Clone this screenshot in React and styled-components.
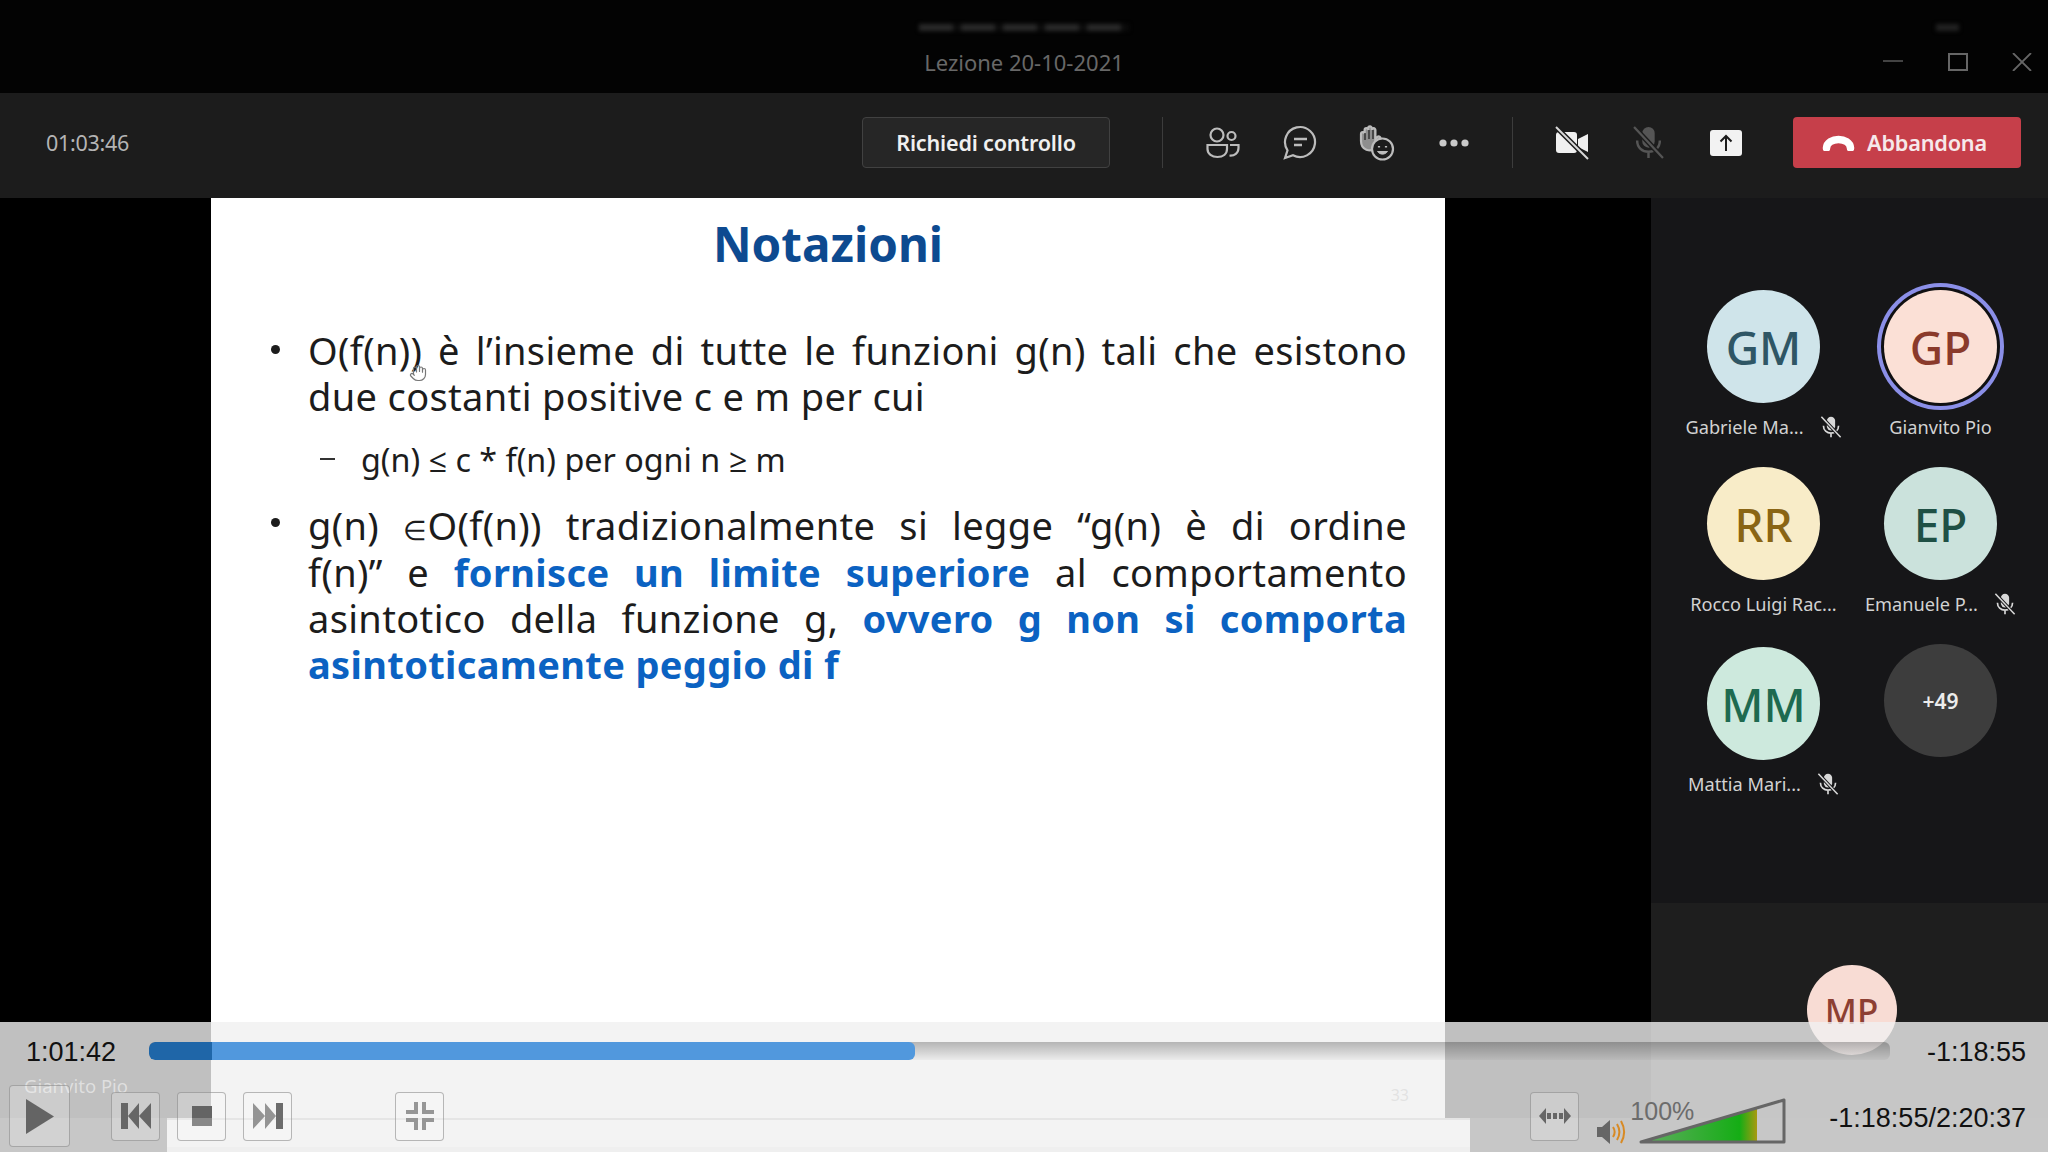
import React from 'react';
import styled, { createGlobalStyle } from 'styled-components';
import { Hand } from 'lucide-react';

const Global = createGlobalStyle`
    html, body {
        margin: 0;
        background: #000;
        overflow: hidden;
    }
    * { box-sizing: border-box; }
`

const Page = styled.div`
    position: relative;
    width: 2048px;
    height: 1152px;
    display: flex;
    flex-direction: column;
    overflow: hidden;
    background: #000;
    font-family: "Noto Sans", "Open Sans", sans-serif;
`

/* title bar */
const TitleBar = styled.div`
    height: 93px;
    flex: none;
    display: grid;
    grid-template-columns: 1fr auto 1fr;
    padding-top: 24px;
    background: #030303;
`
const TitleCol = styled.div`
    grid-column: 2;
    display: flex;
    flex-direction: column;
    align-items: center;
    gap: 16px;
`
const Smudge = styled.div`
    width: ${p => p.$w}px;
    height: 7px;
    filter: blur(2px);
    background: repeating-linear-gradient(90deg, #2a2a2a 0 34px, #0c0c0c 34px 42px);
`
const Title = styled.div`
    font-size: 22px;
    line-height: 30px;
    color: #686868;
`
const WinCol = styled.div`
    grid-column: 3;
    display: flex;
    flex-direction: column;
    align-items: flex-end;
    padding-right: 16px;
    ${Smudge} {
        margin-right: 73px;
        background: #222;
    }
`
const WinControls = styled.div`
    display: flex;
    gap: 44.5px;
    margin-top: 22px;
`

/* toolbar */
const Toolbar = styled.div`
    height: 105px;
    flex: none;
    display: flex;
    align-items: center;
    padding: 0 27px 6px 46px;
    background: #1c1c1c;
`
const Timer = styled.div`
    font-size: 21.5px;
    color: #b4b4b4;
    letter-spacing: -0.3px;
    margin-right: auto;
`
const ControlBtn = styled.div`
    width: 248px;
    height: 51px;
    display: flex;
    align-items: center;
    justify-content: center;
    border: 1px solid #414141;
    border-radius: 4px;
    background: #262626;
    color: #f0f0f0;
    font-size: 21.6px;
    font-weight: 600;
    letter-spacing: -0.2px;
`
const Divider = styled.div`
    width: 1px;
    height: 51px;
    background: #3c3c3c;
    margin: 0 ${p => p.$right}px 0 ${p => p.$left}px;
`
const ToolIcon = styled.div`
    width: 77px;
    height: 51px;
    display: flex;
    align-items: center;
    justify-content: center;
`
const LeaveBtn = styled.div`
    width: 228px;
    height: 51px;
    margin-left: 29px;
    padding-right: 5px;
    display: flex;
    align-items: center;
    justify-content: center;
    gap: 12px;
    border-radius: 4px;
    background: #c63f4a;
    color: #f6e9ea;
    font-size: 21.7px;
    font-weight: 600;
    letter-spacing: -0.2px;
`

/* meeting area */
const Main = styled.div`
    height: 920px;
    flex: none;
    display: flex;
`
const Gutter = styled.div`
    width: 211px;
    flex: none;
    display: flex;
    align-items: flex-end;
    padding: 0 0 20px 24px;
    background: #000;
    color: #999;
    font-size: 18.5px;
`
const Slide = styled.div`
    position: relative;
    width: 1234px;
    flex: none;
    display: flex;
    flex-direction: column;
    padding: 16px 38px 12px 60px;
    background: #fff;
    color: #1c1c1c;
`
const SlideTitle = styled.h1`
    margin: 0 0 53px -22px;
    height: 60px;
    line-height: 60px;
    text-align: center;
    font-size: 47.6px;
    font-weight: 700;
    color: #0d4a90;
`
const BulletRow = styled.div`
    display: flex;
    margin-bottom: ${p => p.$after || 0}px;
`
const Dot = styled.div`
    width: 9px;
    height: 9px;
    flex: none;
    margin: ${p => p.$top}px 28px 0 0;
    border-radius: 50%;
    background: #1c1c1c;
`
const Lines = styled.div`
    flex: 1;
    min-width: 0;
`
const Line = styled.div`
    font-size: 38px;
    line-height: 46.2px;
    letter-spacing: 0.35px;
    text-align: ${p => p.$fill ? 'justify' : 'left'};
    text-align-last: ${p => p.$fill ? 'justify' : 'left'};
    white-space: ${p => p.$fill ? 'normal' : 'nowrap'};
`
const Strong = styled.span`
    font-weight: 700;
    color: #0b62c2;
`
const Element = styled.span`
    font-size: 27px;
    line-height: 0;
`
const SubRow = styled.div`
    display: flex;
    align-items: center;
    height: 46px;
    margin-bottom: 20px;
    padding-left: 49px;
    font-size: 32.3px;
`
const SubDash = styled.div`
    width: 15px;
    height: 2px;
    margin-right: 26px;
    background: #333;
`
const Pointer = styled.div`
    position: absolute;
    left: 198px;
    top: 166px;
    display: flex;
    color: #777;
`
const PageNumber = styled.div`
    margin-top: auto;
    align-self: flex-end;
    margin-right: -2px;
    font-size: 16px;
    color: #a8a8a8;
`
const BlackGap = styled.div`
    width: 206px;
    flex: none;
    background: #000;
`

/* participants */
const Panel = styled.div`
    flex: 1;
    display: flex;
    flex-direction: column;
    background: #1e1e1e;
`
const PanelTop = styled.div`
    height: 705px;
    flex: none;
    padding: 92px 0 0 24px;
    background: #161618;
`
const Grid = styled.div`
    display: grid;
    grid-template-columns: 177px 177px;
    grid-template-rows: 177px 180px auto;
`
const Person = styled.div`
    display: flex;
    flex-direction: column;
    align-items: center;
`
const Avatar = styled.div`
    width: ${p => p.$size || 113}px;
    height: ${p => p.$size || 113}px;
    flex: none;
    display: flex;
    align-items: center;
    justify-content: center;
    border-radius: 50%;
    background: ${p => p.$bg};
    color: ${p => p.$fg};
    font-size: ${p => p.$font || 46}px;
    font-weight: ${p => p.$weight || 500};
    margin-top: ${p => p.$lift ? -p.$lift : 0}px;
    box-shadow: ${p => p.$speaking ? '0 0 0 3px #101012, 0 0 0 7px #8b8fe8' : 'none'};
`
const NameRow = styled.div`
    display: flex;
    align-items: center;
    justify-content: center;
    gap: 16px;
    height: 24px;
    margin-top: 12px;
    font-size: 18.2px;
    color: #d2d2d2;
    white-space: nowrap;
`
const PanelBottom = styled.div`
    flex: 1;
    display: flex;
    justify-content: center;
    padding: 62px 0 0 4px;
`

/* what is behind the player at the very bottom */
const LowerBand = styled.div`
    flex: 1;
    display: flex;
    background: #262626;
`
const LowerSheet = styled.div`
    width: 1303px;
    margin-left: 167px;
    border-top: 2px solid #b8b8b8;
    background: linear-gradient(#fff 0 27px, #e8e8e8 27px);
`

/* player bar */
const Player = styled.div`
    position: absolute;
    left: 0;
    right: 0;
    bottom: 0;
    height: 130px;
    padding: 20px 22px 0 9px;
    background: rgba(240, 240, 240, 0.8);
    font-family: "Liberation Sans", Arial, sans-serif;
`
const SeekRow = styled.div`
    display: flex;
    align-items: center;
    height: 18px;
`
const Clock = styled.div`
    font-size: 27px;
    line-height: 30px;
    padding-top: ${p => p.$drop || 0}px;
    color: #111;
    white-space: nowrap;
`
const ElapsedBox = styled.div`
    width: 140px;
    padding-left: 17px;
    flex: none;
`
const Track = styled.div`
    width: 1741px;
    height: 18px;
    flex: none;
    border-radius: 6px;
    overflow: hidden;
    background: linear-gradient(rgba(0, 0, 0, 0.26), rgba(0, 0, 0, 0.03));
`
const TrackFill = styled.div`
    height: 100%;
    border-radius: 6px;
    background: linear-gradient(90deg, #1f66a8 0 63px, #5198dd 63px);
`
const RemainBox = styled.div`
    margin-left: auto;
`
const ButtonRow = styled.div`
    display: flex;
    align-items: center;
    height: 62px;
    margin-top: 25px;
`
const PlayerBtn = styled.div`
    width: ${p => p.$w || 49}px;
    height: ${p => p.$h || 49}px;
    flex: none;
    display: flex;
    align-items: center;
    justify-content: center;
    margin-left: ${p => p.$left || 0}px;
    border: 1px solid rgba(130, 130, 130, 0.55);
    border-radius: 4px;
    background: rgba(255, 255, 255, 0.2);
`
const Spring = styled.div`
    flex: 1;
`
const VolumeWrap = styled.div`
    position: relative;
    width: 147px;
    height: 46px;
    margin: 10px 43px 0 13px;
    flex: none;
    display: flex;
`
const VolumeText = styled.div`
    position: absolute;
    left: -9px;
    top: -1px;
    font-size: 25px;
    line-height: 28px;
    color: #6c6c6c;
`
const SpeakerBox = styled.div`
    display: flex;
    margin: 32px 0 0 18px;
`
const TotalBox = styled.div`
    flex: none;
`

const MicOff = ({ size = 22, color = '#d8d8d8', slash = '#161618' }) => (
    <svg width={size} height={size} viewBox="0 0 32 32">
        <rect x="10" y="1" width="12" height="20" rx="6" fill={color} />
        <path d="M5 14c0 7 5 11 11 11s11-4 11-11M16 25v6" fill="none" stroke={color} strokeWidth="2.4" />
        <path d="M2 1l28 30" stroke={slash} strokeWidth="5" />
        <path d="M2 1l28 30" stroke={color} strokeWidth="2.2" />
    </svg>
)

const people = [
    { initials: 'GM', name: 'Gabriele Ma...', bg: '#cfe4ea', fg: '#2f5665', muted: true },
    { initials: 'GP', name: 'Gianvito Pio', bg: '#fbe0d6', fg: '#8a3a2b', speaking: true },
    { initials: 'RR', name: 'Rocco Luigi Rac...', bg: '#f8ecc8', fg: '#8a6514' },
    { initials: 'EP', name: 'Emanuele P...', bg: '#cbe2dc', fg: '#1f5045', muted: true },
    { initials: 'MM', name: 'Mattia Mari...', bg: '#cde9dd', fg: '#1e6a50', muted: true },
]

const App = () => {
    return (
        <Page>
            <Global />
            <TitleBar>
                <TitleCol>
                    <Smudge $w={210} />
                    <Title>Lezione 20-10-2021</Title>
                </TitleCol>
                <WinCol>
                    <Smudge $w={23} />
                    <WinControls>
                        <svg width="20" height="18" viewBox="0 0 20 18"><path d="M0 8h20" stroke="#555" strokeWidth="1.6" /></svg>
                        <svg width="20" height="18" viewBox="0 0 20 18"><rect x="1" y="1" width="18" height="16" fill="none" stroke="#666" strokeWidth="2" /></svg>
                        <svg width="20" height="18" viewBox="0 0 20 18"><path d="M1 0l18 18M19 0L1 18" stroke="#666" strokeWidth="1.8" /></svg>
                    </WinControls>
                </WinCol>
            </TitleBar>

            <Toolbar>
                <Timer>01:03:46</Timer>
                <ControlBtn>Richiedi controllo</ControlBtn>
                <Divider $left={52} $right={21} />
                <ToolIcon>
                    <svg width="34" height="34" viewBox="0 0 34 34" fill="none" stroke="#bcbcbc" strokeWidth="2.2">
                        <circle cx="11" cy="9" r="6.5" />
                        <circle cx="25.5" cy="10" r="4" />
                        <path d="M1.5 19H21v4c0 5-4 8-9.5 8S1.5 28 1.5 23z" />
                        <path d="M24 19h8.5v3c0 5-4 8-9 7.5" />
                    </svg>
                </ToolIcon>
                <ToolIcon>
                    <svg width="36" height="36" viewBox="0 0 36 36" fill="none" stroke="#bcbcbc" strokeWidth="2.2">
                        <path d="M3 33l2.5-7.7A15 15 0 1 1 11 30.3z" />
                        <path d="M12 14h13M12 20h8" strokeWidth="2.6" />
                    </svg>
                </ToolIcon>
                <ToolIcon>
                    <svg width="36" height="36" viewBox="0 0 36 36" fill="none" stroke="#bcbcbc" strokeWidth="2.2">
                        <path d="M2 16V9a1.8 1.8 0 0 1 3.6 0V5a1.8 1.8 0 0 1 3.6 0V3.2a1.8 1.8 0 0 1 3.6 0V5a1.8 1.8 0 0 1 3.6 0v9l2-2c1.5-1.5 4 .5 2.6 2.4L15 24c-3 2.5-13 2-13-8z" fill="#8e8e8e" />
                        <path d="M6 8v7M10 5v9M14 5v9" stroke="#1c1c1c" strokeWidth="1.2" />
                        <circle cx="23.5" cy="24" r="10.5" fill="#1c1c1c" />
                        <path d="M18.5 26.5c2.5 3.5 7.5 3.5 10 0z" fill="#bcbcbc" strokeWidth="1" />
                        <path d="M20 21v1.5M27 21v1.5" />
                    </svg>
                </ToolIcon>
                <ToolIcon>
                    <svg width="30" height="8" viewBox="0 0 30 8" fill="#cacaca">
                        <circle cx="4" cy="4" r="3.6" />
                        <circle cx="15" cy="4" r="3.6" />
                        <circle cx="26" cy="4" r="3.6" />
                    </svg>
                </ToolIcon>
                <Divider $left={20} $right={20} />
                <ToolIcon>
                    <svg width="34" height="34" viewBox="0 0 34 34">
                        <rect x="1" y="6" width="21" height="21" rx="3" fill="#f0f0f0" />
                        <path d="M23 13l10-5v18l-10-5z" fill="#f0f0f0" />
                        <path d="M1 1l32 32" stroke="#1c1c1c" strokeWidth="5" />
                        <path d="M1 1l32 32" stroke="#d8d8d8" strokeWidth="2" />
                    </svg>
                </ToolIcon>
                <ToolIcon>
                    <MicOff size={33} color="#555" slash="#1c1c1c" />
                </ToolIcon>
                <ToolIcon>
                    <svg width="32" height="26" viewBox="0 0 32 26">
                        <rect width="32" height="26" rx="3" fill="#f2f2f2" />
                        <path d="M16 21V6M10.5 11.5L16 6l5.5 5.5" fill="none" stroke="#1c1c1c" strokeWidth="2" />
                    </svg>
                </ToolIcon>
                <LeaveBtn>
                    <svg width="33" height="16" viewBox="0 0 33 16">
                        <path d="M4.5 13C5 1.5 28 1.5 28.5 13" fill="none" stroke="#fff" strokeWidth="7.5" strokeLinecap="round" />
                    </svg>
                    Abbandona
                </LeaveBtn>
            </Toolbar>

            <Main>
                <Gutter>Gianvito Pio</Gutter>
                <Slide>
                    <SlideTitle>Notazioni</SlideTitle>
                    <BulletRow $after={17}>
                        <Dot $top={18} />
                        <Lines>
                            <Line $fill>O(f(n)) è l’insieme di tutte le funzioni g(n) tali che esistono</Line>
                            <Line>due costanti positive c e m per cui</Line>
                        </Lines>
                    </BulletRow>
                    <SubRow>
                        <SubDash />
                        g(n) ≤ c * f(n) per ogni n ≥ m
                    </SubRow>
                    <BulletRow>
                        <Dot $top={16} />
                        <Lines>
                            <Line $fill>g(n) <Element>∈</Element>O(f(n)) tradizionalmente si legge “g(n) è di ordine</Line>
                            <Line $fill>f(n)” e <Strong>fornisce un limite superiore</Strong> al comportamento</Line>
                            <Line $fill>asintotico della funzione g, <Strong>ovvero g non si comporta</Strong></Line>
                            <Line><Strong>asintoticamente peggio di f</Strong></Line>
                        </Lines>
                    </BulletRow>
                    <Pointer><Hand size={18} strokeWidth={1.6} /></Pointer>
                    <PageNumber>33</PageNumber>
                </Slide>
                <BlackGap />
                <Panel>
                    <PanelTop>
                        <Grid>
                            {people.map(p => (
                                <Person key={p.initials}>
                                    <Avatar $bg={p.bg} $fg={p.fg} $speaking={p.speaking}>{p.initials}</Avatar>
                                    <NameRow>
                                        {p.name}
                                        {p.muted && <MicOff />}
                                    </NameRow>
                                </Person>
                            ))}
                            <Person>
                                <Avatar $bg="#3d3d3d" $fg="#ececec" $font={21} $weight={600} $lift={3}>+49</Avatar>
                            </Person>
                        </Grid>
                    </PanelTop>
                    <PanelBottom>
                        <Avatar $size={90} $bg="#f8dcd4" $fg="#8d3f33" $font={35}>MP</Avatar>
                    </PanelBottom>
                </Panel>
            </Main>
            <LowerBand>
                <LowerSheet />
            </LowerBand>

            <Player>
                <SeekRow>
                    <ElapsedBox><Clock $drop={2}>1:01:42</Clock></ElapsedBox>
                    <Track><TrackFill style={{ width: `${(766 / 1741) * 100}%` }} /></Track>
                    <RemainBox><Clock $drop={2}>-1:18:55</Clock></RemainBox>
                </SeekRow>
                <ButtonRow>
                    <PlayerBtn $w={61} $h={62}>
                        <svg width="28" height="35" viewBox="0 0 28 35"><path d="M0 0l28 17.5L0 35z" fill="#646464" /></svg>
                    </PlayerBtn>
                    <PlayerBtn $left={41}>
                        <svg width="30" height="26" viewBox="0 0 30 26" fill="#666">
                            <rect width="7" height="26" />
                            <path d="M7 13L18 0v26zM18 13L30 0v26z" />
                        </svg>
                    </PlayerBtn>
                    <PlayerBtn $left={17}>
                        <svg width="20" height="20" viewBox="0 0 20 20">
                            <rect width="20" height="12" fill="#646464" />
                            <rect y="12" width="20" height="8" fill="#888" />
                        </svg>
                    </PlayerBtn>
                    <PlayerBtn $left={17}>
                        <svg width="30" height="26" viewBox="0 0 30 26">
                            <path d="M0 0l12 13L0 26zM12 0l11 13-11 13z" fill="#949494" />
                            <rect x="23" width="7" height="26" fill="#6c6c6c" />
                        </svg>
                    </PlayerBtn>
                    <PlayerBtn $left={103}>
                        <svg width="28" height="28" viewBox="0 0 28 28" fill="#969696">
                            <path d="M8 0h4v12H0V8h8zM16 0h4v8h8v4H16zM0 16h12v12H8v-8H0zM16 16h12v4h-8v8h-4z" />
                        </svg>
                    </PlayerBtn>
                    <Spring />
                    <PlayerBtn>
                        <svg width="32" height="16" viewBox="0 0 32 16" fill="#666">
                            <path d="M0 8l7-8v16zM32 8l-7-8v16z" />
                            <rect x="8" y="5" width="4" height="6" />
                            <rect x="14" y="5" width="4" height="6" />
                            <rect x="20" y="5" width="4" height="6" />
                        </svg>
                    </PlayerBtn>
                    <SpeakerBox>
                        <svg width="29" height="26" viewBox="0 0 29 26" fill="none">
                            <path d="M0 8h5l8-7v24l-8-7H0z" fill="#666" />
                            <path d="M16 8c2 3 2 7 0 10M20 5c3 5 3 11 0 16M24 2c4 7 4 15 0 22" stroke="#d88a24" strokeWidth="2" />
                        </svg>
                    </SpeakerBox>
                    <VolumeWrap>
                        <svg width="147" height="46" viewBox="0 0 147 46">
                            <defs>
                                <linearGradient id="vol" x1="0" x2="1" y1="0" y2="0">
                                    <stop offset="0" stopColor="#62ad62" />
                                    <stop offset="0.85" stopColor="#15ad15" />
                                    <stop offset="1" stopColor="#a89a10" />
                                </linearGradient>
                            </defs>
                            <path d="M2 44L118 10v34z" fill="url(#vol)" />
                            <path d="M2 44L145 2v42z" fill="none" stroke="#666" strokeWidth="3" strokeLinejoin="round" />
                        </svg>
                        <VolumeText>100%</VolumeText>
                    </VolumeWrap>
                    <TotalBox><Clock $drop={3}>-1:18:55/2:20:37</Clock></TotalBox>
                </ButtonRow>
            </Player>
        </Page>
    );
};
export default App;
